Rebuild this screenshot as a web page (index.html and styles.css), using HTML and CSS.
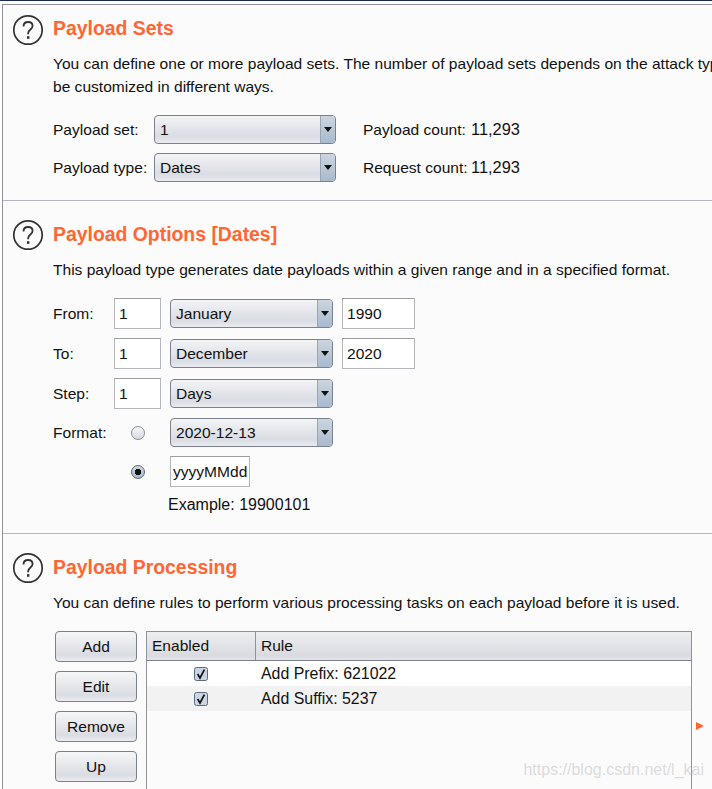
FILE: index.html
```html
<!DOCTYPE html>
<html>
<head>
    <meta charset="UTF-8">
    <title>Payloads</title>
    <link rel="stylesheet" href="styles.css">
</head>
<body>
    <div class="panel">
        <section class="section sets">
            <div class="head">
                <svg class="help" width="32" height="32" viewBox="0 0 32 32"><circle cx="16" cy="16" r="14.2" fill="none" stroke="#333" stroke-width="1.7"/><path d="M11.5 12.5c0-2.8 2-4.5 4.6-4.5s4.5 1.6 4.5 4c0 3.4-4.4 3.6-4.4 7.2v1" fill="none" stroke="#333" stroke-width="1.8"/><rect x="15" y="22.2" width="2.4" height="2.6" fill="#333"/></svg>
                <h2>Payload Sets</h2>
            </div>
            <p class="text">You can define one or more payload sets. The number of payload sets depends on the attack type defined in the Positions tab. Various payload types are available for each payload set, and each payload type can<br>be customized in different ways.</p>
            <div class="set-row first">
                <span class="set-label">Payload set:</span>
                <div class="combo wide"><span>1</span><i class="arrow"></i></div>
                <span class="count-label">Payload count:</span>
                <span class="num">11,293</span>
            </div>
            <div class="set-row">
                <span class="set-label">Payload type:</span>
                <div class="combo wide"><span>Dates</span><i class="arrow"></i></div>
                <span class="count-label">Request count:</span>
                <span class="num">11,293</span>
            </div>
        </section>

        <section class="section options">
            <div class="head">
                <svg class="help" width="32" height="32" viewBox="0 0 32 32"><circle cx="16" cy="16" r="14.2" fill="none" stroke="#333" stroke-width="1.7"/><path d="M11.5 12.5c0-2.8 2-4.5 4.6-4.5s4.5 1.6 4.5 4c0 3.4-4.4 3.6-4.4 7.2v1" fill="none" stroke="#333" stroke-width="1.8"/><rect x="15" y="22.2" width="2.4" height="2.6" fill="#333"/></svg>
                <h2>Payload Options [Dates]</h2>
            </div>
            <p class="text">This payload type generates date payloads within a given range and in a specified format.</p>
            <div class="date-grid">
                <span>From:</span>
                <div class="field day">1</div>
                <div class="combo"><span>January</span><i class="arrow"></i></div>
                <div class="field year">1990</div>

                <span>To:</span>
                <div class="field day">1</div>
                <div class="combo"><span>December</span><i class="arrow"></i></div>
                <div class="field year">2020</div>

                <span>Step:</span>
                <div class="field day">1</div>
                <div class="combo"><span>Days</span><i class="arrow"></i></div>
                <div></div>

                <span>Format:</span>
                <div class="radio-cell"><i class="radio"></i></div>
                <div class="combo"><span>2020-12-13</span><i class="arrow"></i></div>
                <div></div>

                <div></div>
                <div class="radio-cell"><i class="radio on"></i></div>
                <div class="field custom">yyyyMMdd</div>
                <div></div>
            </div>
            <div class="example">Example: 19900101</div>
        </section>

        <section class="section processing">
            <div class="head">
                <svg class="help" width="32" height="32" viewBox="0 0 32 32"><circle cx="16" cy="16" r="14.2" fill="none" stroke="#333" stroke-width="1.7"/><path d="M11.5 12.5c0-2.8 2-4.5 4.6-4.5s4.5 1.6 4.5 4c0 3.4-4.4 3.6-4.4 7.2v1" fill="none" stroke="#333" stroke-width="1.8"/><rect x="15" y="22.2" width="2.4" height="2.6" fill="#333"/></svg>
                <h2>Payload Processing</h2>
            </div>
            <p class="text">You can define rules to perform various processing tasks on each payload before it is used.</p>
            <div class="rules">
                <div class="buttons">
                    <button type="button">Add</button>
                    <button type="button">Edit</button>
                    <button type="button">Remove</button>
                    <button type="button">Up</button>
                </div>
                <div class="table">
                    <div class="table-head">
                        <div class="col-enabled">Enabled</div>
                        <div class="col-rule">Rule</div>
                    </div>
                    <div class="table-row">
                        <div class="col-check"><svg width="14" height="14" viewBox="0 0 14 14"><rect x=".5" y=".5" width="13" height="13" rx="2" fill="#c9d5e2" stroke="#5f6b7c"/><path d="M3.6 7l2.4 4L10.4 2.6" fill="none" stroke="#111" stroke-width="1.7"/></svg></div>
                        <div>Add Prefix: 621022</div>
                    </div>
                    <div class="table-row alt">
                        <div class="col-check"><svg width="14" height="14" viewBox="0 0 14 14"><rect x=".5" y=".5" width="13" height="13" rx="2" fill="#c9d5e2" stroke="#5f6b7c"/><path d="M3.6 7l2.4 4L10.4 2.6" fill="none" stroke="#111" stroke-width="1.7"/></svg></div>
                        <div>Add Suffix: 5237</div>
                    </div>
                </div>
                <i class="marker"></i>
            </div>
        </section>
    </div>
    <div class="watermark">https://blog.csdn.net/l_kai</div>
</body>
</html>
```

FILE: styles.css
```css
html, body {
    height: 100%;
    overflow: hidden;
}
body {
    margin: 0;
    font-family: "Liberation Sans", Arial, sans-serif;
    font-size: 15.55px;
    color: #111;
    background-color: #fff;
    border-top: 1px solid #1b2a4a;
    box-sizing: border-box;
}
.panel {
    margin: 3px 0 0 2px;
    height: 800px;
    border-left: 1px solid #8e929c;
    border-top: 1px solid #8e929c;
    background-color: #fbfbfb;
    overflow: hidden;
}
.section {
    padding-left: 9px;
    border-bottom: 1px solid #b4b6bd;
    white-space: nowrap;
}
.sets {
    height: 195px;
}
.options {
    height: 332px;
}
.processing {
    border-bottom: none;
}
.head {
    display: flex;
    align-items: center;
    height: 32px;
    padding-top: 9px;
}
.options .head, .processing .head {
    padding-top: 18px;
}
.help {
    flex: none;
}
h2 {
    margin: 0 0 3px 9px;
    font-size: 19.4px;
    font-weight: bold;
    color: #ff6633;
}
.options h2, .processing h2 {
    margin-bottom: 1px;
}
.text {
    margin: 7px 0 0 41px;
    line-height: 23px;
}
.sets .text {
    margin-top: 6px;
}
.set-row {
    display: flex;
    align-items: center;
    height: 29px;
    margin: 9px 0 0 41px;
}
.set-row.first {
    margin-top: 17px;
}
.set-label {
    width: 101px;
}
.count-label {
    width: 103px;
    margin: 0 5px 0 27px;
}
.num {
    font-size: 16.4px;
}
.example {
    font-size: 16px;
}
.table-row {
    font-size: 15.9px;
}
.combo {
    display: flex;
    align-items: center;
    justify-content: space-between;
    box-sizing: border-box;
    height: 29px;
    padding-left: 5px;
    border: 1px solid #7a808c;
    border-radius: 4px;
    background: linear-gradient(#f3f4f6, #d9dce3 75%, #e9ebef);
    overflow: hidden;
}
.combo.wide {
    width: 182px;
}
.arrow {
    position: relative;
    flex: none;
    width: 14px;
    height: 100%;
    border-left: 1px solid #9aa4b2;
    background: linear-gradient(#ccd5df, #a8bacd);
}
.arrow::after {
    content: "";
    position: absolute;
    left: 3px;
    top: 11px;
    border: 4px solid transparent;
    border-top: 5px solid #111;
    border-bottom: none;
}
.date-grid {
    display: grid;
    grid-template-columns: 52px 47px 163px 73px;
    grid-template-rows: 31px 31px 31px 29px 31px;
    column-gap: 9px;
    row-gap: 9px;
    align-items: center;
    margin: 17px 0 0 41px;
}
.date-grid > span {
    margin-right: -9px;
}
.field {
    box-sizing: border-box;
    height: 31px;
    line-height: 29px;
    padding-left: 4px;
    border: 1px solid #b5b7bb;
    border-top-color: #9b9da1;
    background-color: #fff;
}
.custom {
    width: 80px;
    padding-left: 2px;
}
.radio-cell {
    display: flex;
    justify-content: center;
}
.radio {
    box-sizing: border-box;
    width: 14px;
    height: 14px;
    border: 1px solid #8b909a;
    border-radius: 50%;
    background: linear-gradient(#f6f7f9, #d5d9e0);
}
.radio.on {
    border-color: #5f6b7c;
    background: radial-gradient(circle, #111 0 3px, transparent 3.5px), linear-gradient(#cfd8e3, #a9b7c8);
}
.example {
    margin: 9px 0 0 156px;
}
.rules {
    display: flex;
    align-items: flex-start;
    margin: 17px 0 0 43px;
}
.buttons {
    display: flex;
    flex-direction: column;
    gap: 9px;
    width: 82px;
}
button {
    height: 31px;
    padding: 0;
    font: inherit;
    color: #111;
    border: 1px solid #7b808a;
    border-radius: 4px;
    background: linear-gradient(#f5f6f7, #d9dce2 80%, #eceef1);
}
.table {
    width: 546px;
    height: 300px;
    margin-left: 9px;
    box-sizing: border-box;
    border: 1px solid #8e929c;
    border-bottom: none;
}
.table-head {
    display: flex;
    height: 28px;
    line-height: 27px;
    border-bottom: 1px solid #7b808a;
    background: linear-gradient(#eceef0, #d9dbe0 85%, #e4e5e9);
}
.col-enabled {
    box-sizing: border-box;
    width: 109px;
    padding-left: 5px;
    border-right: 1px solid #8e929c;
}
.col-rule {
    padding-left: 5px;
}
.table-row {
    display: flex;
    align-items: center;
    height: 25px;
    background-color: #fff;
}
.table-row.alt {
    background-color: #f2f2f2;
}
.col-check {
    display: flex;
    justify-content: center;
    align-items: center;
    width: 108px;
    margin-right: 6px;
}
.marker {
    flex: none;
    align-self: flex-start;
    margin: 91px 0 0 4px;
    border: 4.5px solid transparent;
    border-left: 8px solid #ff6633;
    border-right: none;
}
.watermark {
    position: absolute;
    right: 8px;
    top: 761px;
    font-size: 16px;
    color: rgba(170, 170, 170, 0.4);
}
```
